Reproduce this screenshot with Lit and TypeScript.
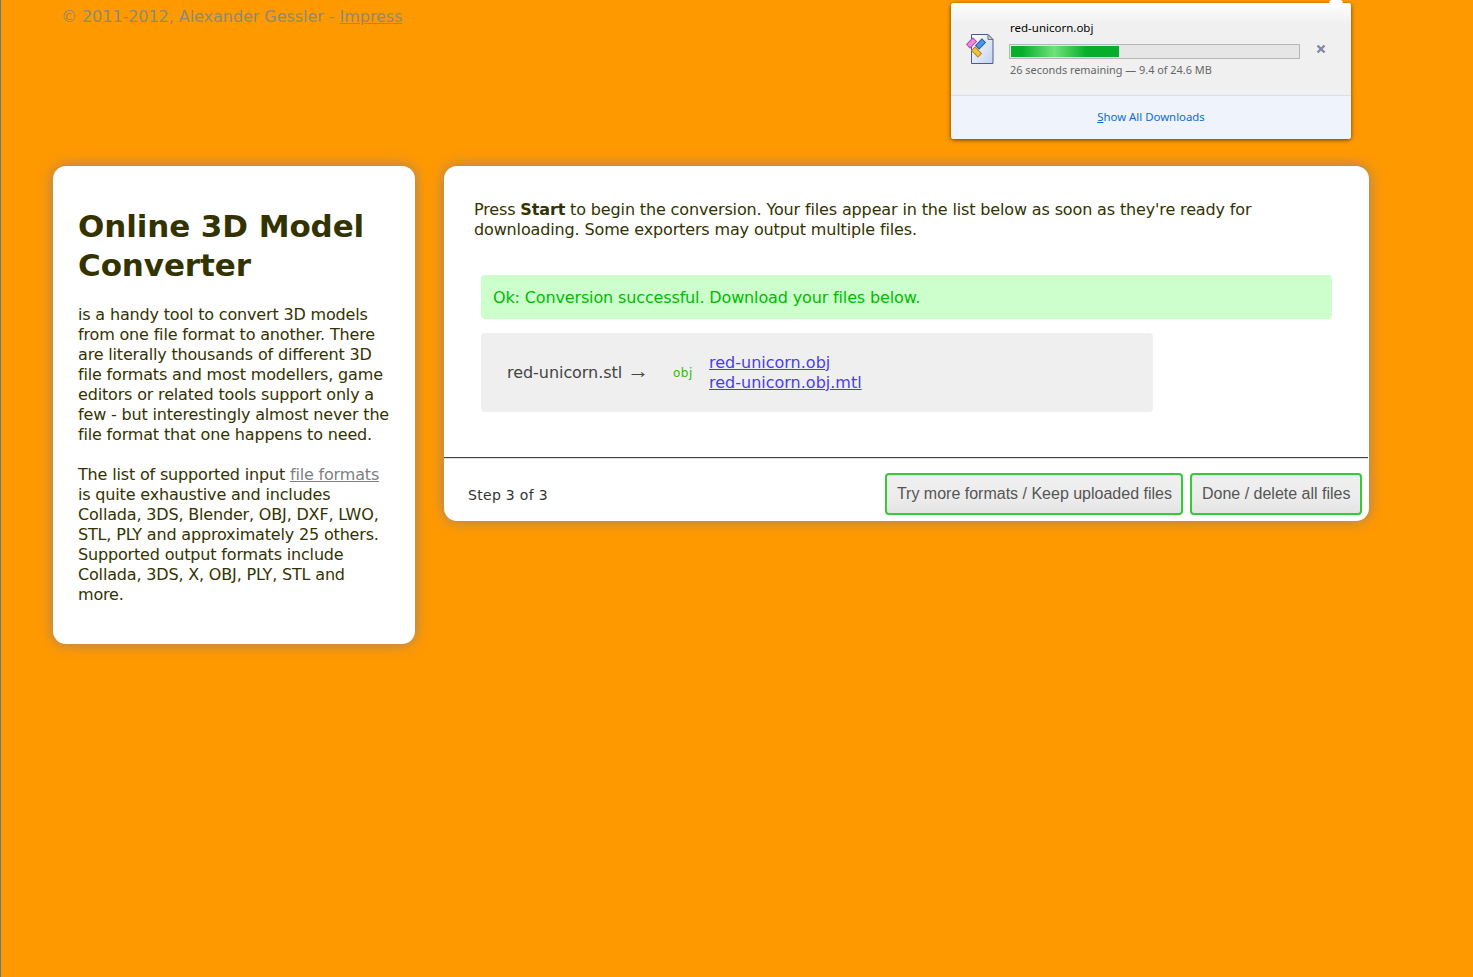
import { LitElement, css, html } from 'lit';
import { customElement } from 'lit/decorators.js';

@customElement('app-root')
export class AppRoot extends LitElement {
  static override styles = css`
    :host {
      display: block;
      position: relative;
      min-height: 977px;
      background: #ff9900;
      border-left: 1px solid #5b7a94;
      box-sizing: border-box;
      font-family: 'DejaVu Sans', Verdana, sans-serif;
      overflow: hidden;
    }

    .copyright {
      height: 166px;
      box-sizing: border-box;
      padding: 7px 0 0 60px;
      font-size: 16px;
      line-height: 20px;
      letter-spacing: -0.05px;
      color: #8f8a78;
    }

    .copyright a {
      color: #8f8a78;
    }

    .columns {
      display: flex;
      align-items: flex-start;
      gap: 29px;
      padding-left: 52px;
    }

    .card {
      background: #fff;
      border-radius: 13px;
      box-shadow: 0 0 14px rgba(150, 130, 120, 0.95);
    }

    .intro {
      width: 362px;
      height: 478px;
      box-sizing: border-box;
      padding: 41px 22px 0 25px;
      font-size: 16px;
      line-height: 20px;
      letter-spacing: -0.17px;
      color: #333300;
    }

    h1 {
      margin: 0 0 20px;
      font-size: 31px;
      line-height: 39px;
      font-weight: 700;
      letter-spacing: -0.1px;
      color: #333300;
    }

    p {
      margin: 0 0 20px;
    }

    .intro a {
      color: #808080;
    }

    .main {
      width: 925px;
      height: 355px;
      display: flex;
      flex-direction: column;
      font-size: 16px;
      line-height: 20px;
      letter-spacing: -0.14px;
      color: #333300;
    }

    .body {
      flex: 1;
      padding: 33px 30px 0;
    }

    .lead {
      margin: 0 0 36px;
      padding-top: 1px;
    }

    .ok {
      margin: -1px 7px 14px 7px;
      height: 44px;
      display: flex;
      align-items: center;
      padding: 1px 0 0 12px;
      box-sizing: border-box;
      background: #ccffcc;
      border-radius: 4px;
      color: #00bb00;
    }

    .result {
      margin-left: 7px;
      width: 672px;
      height: 79px;
      display: flex;
      align-items: center;
      box-sizing: border-box;
      padding-left: 26px;
      background: #efefef;
      border-radius: 4px;
      letter-spacing: -0.05px;
      color: #444;
    }

    .source {
      width: 166px;
    }

    .arrow {
      font-family: 'Liberation Serif', serif;
      font-size: 22px;
      line-height: 0;
    }

    .format {
      width: 36px;
      font-size: 12px;
      letter-spacing: 0.5px;
      color: #33bb00;
    }

    .links {
      display: flex;
      flex-direction: column;
      letter-spacing: 0;
    }

    .links a {
      color: #4a3cf0;
    }

    .foot {
      height: 64px;
      margin-right: 1px;
      display: flex;
      align-items: flex-start;
      justify-content: space-between;
      box-sizing: border-box;
      padding: 15px 6px 0 24px;
      border-top: 1px solid #444;
      box-shadow: inset 0 1px 0 #ddd;
    }

    .step {
      padding-top: 12px;
      font-size: 14px;
      letter-spacing: 0.3px;
      color: #333;
    }

    .actions {
      display: flex;
      gap: 7px;
    }

    button {
      height: 42px;
      padding: 0 9.5px;
      border: 2px solid #33cc33;
      border-radius: 4px;
      background: linear-gradient(#f0f0f0, #ececec 60%, #e4e4e4);
      font-family: 'Liberation Sans', Arial, sans-serif;
      font-size: 16px;
      color: #555;
    }

    .popup {
      position: absolute;
      left: 950px;
      top: 3px;
      width: 400px;
      height: 136px;
      display: flex;
      flex-direction: column;
      border-radius: 3px;
      background: #f0f0f0;
      box-shadow: 0 1px 4px rgba(0, 0, 0, 0.6);
      font-family: 'Noto Sans', 'Open Sans', sans-serif;
      font-size: 11.5px;
      color: #000;
    }

    .popup::before {
      content: '';
      position: absolute;
      top: -6px;
      right: 10px;
      width: 10px;
      height: 10px;
      background: #fff;
      transform: rotate(45deg);
    }

    .item {
      flex: 1;
      position: relative;
      display: flex;
      align-items: flex-start;
      padding: 17px 0 0 15px;
      background: linear-gradient(#fff, #f0f0f0 20px);
      border-radius: 3px 3px 0 0;
    }

    .file-icon {
      margin: 12px 16px 0 0;
    }

    .details {
      width: 291px;
    }

    .name {
      line-height: 15px;
    }

    .bar {
      margin: 9px 1px 4px -1px;
      height: 15px;
      box-sizing: border-box;
      border: 1px solid #b5b5b5;
      padding: 1px;
      background: #e6e6e6;
    }

    .fill {
      height: 100%;
      background: linear-gradient(90deg, #06ae2c 0%, #06ae2c 10%, #70e27a 40%, #06ae2c 70%);
    }

    .status {
      font-size: 10.9px;
      line-height: 14px;
      color: #666;
    }

    .close {
      position: absolute;
      left: 365px;
      top: 41px;
    }

    .all {
      height: 44px;
      display: flex;
      align-items: center;
      justify-content: center;
      box-sizing: border-box;
      padding-bottom: 3px;
      background: #eff3fb;
      border-top: 1px solid #d8e0e8;
      border-radius: 0 0 3px 3px;
      font-size: 11.4px;
      color: #0a6cd8;
    }

    .all u {
      text-decoration-thickness: 1px;
    }
  `;

  private renderFileIcon() {
    return html`<svg class="file-icon" width="28" height="33" viewBox="0 0 28 33">
      <defs>
        <linearGradient id="sheet" x1="0" y1="0" x2="1" y2="1">
          <stop offset="0" stop-color="#ffffff" />
          <stop offset="1" stop-color="#c4d2ee" />
        </linearGradient>
      </defs>
      <path d="M5.5 2.5H22L27 7.5V31.5H5.5Z" fill="url(#sheet)" stroke="#4a5c8c" />
      <path d="M22 2.5V7.5H27Z" fill="#c8cdd8" stroke="#6d7688" />
      <rect x="1" y="8.5" width="9" height="5" transform="rotate(-45 5.5 11)" fill="#ee8ae0" stroke="#b050a8" />
      <rect x="10" y="9.5" width="9" height="5" transform="rotate(-45 14.5 12)" fill="#4a96e8" stroke="#2a60a8" />
      <rect x="6" y="17.5" width="9" height="5" transform="rotate(45 10.5 20)" fill="#f2c23c" stroke="#b08a20" />
    </svg>`;
  }

  override render() {
    return html`
      <div class="copyright">© 2011-2012, Alexander Gessler - <a href="#">Impress</a></div>
      <div class="columns">
        <section class="card intro">
          <h1>Online 3D Model Converter</h1>
          <p>
            is a handy tool to convert 3D models from one file format to another. There are literally thousands of
            different 3D file formats and most modellers, game editors or related tools support only a few - but
            interestingly almost never the file format that one happens to need.
          </p>
          <p>
            The list of supported input <a href="#">file formats</a> is quite exhaustive and includes Collada, 3DS,
            Blender, OBJ, DXF, LWO, STL, PLY and approximately 25 others. Supported output formats include Collada, 3DS,
            X, OBJ, PLY, STL and more.
          </p>
        </section>
        <section class="card main">
          <div class="body">
            <p class="lead">
              Press <strong>Start</strong> to begin the conversion. Your files appear in the list below as soon as
              they're ready for downloading. Some exporters may output multiple files.
            </p>
            <div class="ok">Ok: Conversion successful. Download your files below.</div>
            <div class="result">
              <span class="source">red-unicorn.stl <span class="arrow">→</span></span>
              <span class="format">obj</span>
              <div class="links">
                <a href="#">red-unicorn.obj</a>
                <a href="#">red-unicorn.obj.mtl</a>
              </div>
            </div>
          </div>
          <div class="foot">
            <span class="step">Step 3 of 3</span>
            <div class="actions">
              <button>Try more formats / Keep uploaded files</button>
              <button>Done / delete all files</button>
            </div>
          </div>
        </section>
      </div>
      <aside class="popup">
        <div class="item">
          ${this.renderFileIcon()}
          <div class="details">
            <div class="name">red-unicorn.obj</div>
            <div class="bar"><div class="fill" style="width: 37.5%"></div></div>
            <div class="status">26 seconds remaining — 9.4 of 24.6 MB</div>
          </div>
          <svg class="close" width="10" height="10" viewBox="0 0 10 10">
            <path d="M1.5 1.5L8.5 8.5M8.5 1.5L1.5 8.5" stroke="#7d8aa6" stroke-width="2.4" />
          </svg>
        </div>
        <div class="all"><span><u>S</u>how All Downloads</span></div>
      </aside>
    `;
  }
}
